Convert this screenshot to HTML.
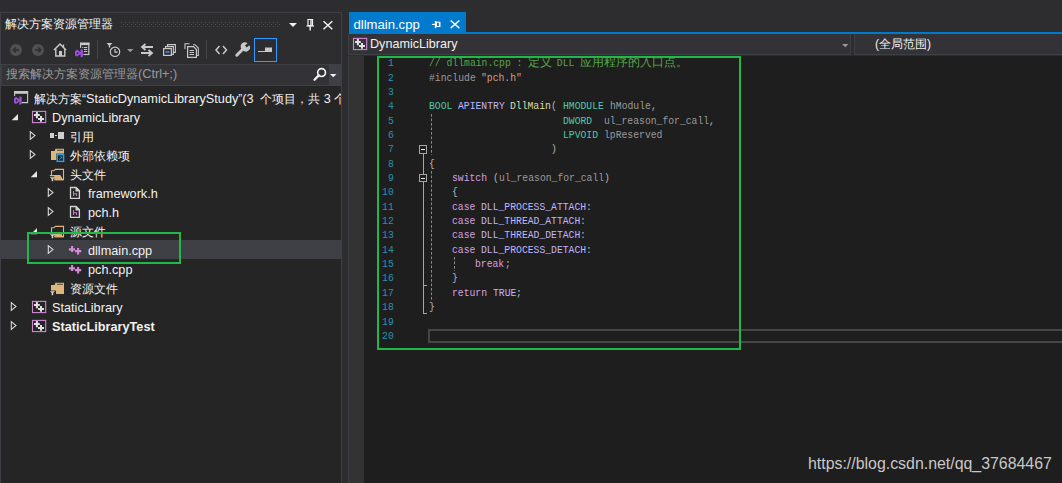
<!DOCTYPE html>
<html><head><meta charset="utf-8"><style>
*{margin:0;padding:0;box-sizing:border-box}
html,body{width:1062px;height:483px;overflow:hidden;background:#2d2d30;font-family:'Liberation Sans', sans-serif;}
.a{position:absolute}
.t{position:absolute;white-space:nowrap;color:#f1f1f1;font-size:12.7px;line-height:19px}
.c{position:absolute;white-space:pre;font-family:'Liberation Mono', monospace;font-size:11.5px;line-height:14px;color:#dcdcdc}
svg{position:absolute;overflow:visible}
</style></head><body>

<div class="a" style="left:0;top:12px;width:342px;height:471px;border:1px solid #3f3f46;border-bottom:none;background:#2d2d30"></div>
<div class="t" style="left:5px;top:14px;font-size:12px;line-height:20px;color:#f1f1f1">解决方案资源管理器</div>
<svg style="left:121px;top:22px" width="160" height="5"><defs><pattern id="gp" width="4" height="4" patternUnits="userSpaceOnUse"><rect x="0" y="0" width="1" height="1" fill="#505055"/><rect x="2" y="2" width="1" height="1" fill="#505055"/></pattern></defs><rect width="159" height="5" fill="url(#gp)"/></svg>
<svg style="left:289px;top:23px" width="9" height="5"><path d="M0 0H8L4 4Z" fill="#f1f1f1"/></svg>
<svg style="left:306px;top:19px" width="9" height="12"><path d="M2 0.5H6.5V6.5H2Z" fill="none" stroke="#f1f1f1" stroke-width="1.2"/><path d="M0.5 7H8" stroke="#f1f1f1" stroke-width="1.2"/><path d="M4.2 7V11.5" stroke="#f1f1f1" stroke-width="1.4"/><path d="M5 1V6.5" stroke="#f1f1f1" stroke-width="1.4"/></svg>
<svg style="left:323px;top:21px" width="11" height="9"><path d="M0.5 0.3L9.3 8.2M9.3 0.3L0.5 8.2" stroke="#f1f1f1" stroke-width="1.5"/></svg>
<svg style="left:10px;top:44px" width="13" height="13"><circle cx="6" cy="6" r="6" fill="#505050"/><path d="M9 6H3.5M5.8 3.5L3.2 6L5.8 8.5" stroke="#2d2d30" stroke-width="1.4" fill="none"/></svg>
<svg style="left:32px;top:44px" width="13" height="13"><circle cx="6" cy="6" r="6" fill="#505050"/><path d="M3 6H8.5M6.2 3.5L8.8 6L6.2 8.5" stroke="#2d2d30" stroke-width="1.4" fill="none"/></svg>
<svg style="left:53px;top:42px" width="15" height="15"><path d="M1 8L7 2L13 8" fill="none" stroke="#c8c8c8" stroke-width="1.5"/><path d="M10.5 2.5V5" stroke="#c8c8c8" stroke-width="1.3"/><path d="M2.8 7V14H11.8V7" fill="none" stroke="#c8c8c8" stroke-width="1.4"/><rect x="6" y="9" width="3" height="5" fill="#c8c8c8"/></svg>
<svg style="left:72px;top:40px" width="20" height="20"><rect x="8.6" y="3.3" width="8.2" height="11.2" fill="#2d2d30" stroke="#c8c8c8" stroke-width="1.2"/><rect x="8" y="2.7" width="9.4" height="2.4" fill="#c8c8c8"/><rect x="10" y="7" width="1.2" height="1.2" fill="#c8c8c8"/><path d="M12 7.5H15.2M12 9.5H15.2M12 11.5H15.2" stroke="#c8c8c8" stroke-width="1.1"/><rect x="7.5" y="7.8" width="4" height="9.6" fill="#2d2d30"/><path d="M3 11.3L5 9.6L8.6 12.2V8.9L11 9.9V16.6L8.6 17.4V14.1L5 16.6L3 15.6Z M4.9 11.8V14.5L6.8 13.15Z" fill="#9a4fd9" fill-rule="evenodd"/></svg>
<div class="a" style="left:97px;top:40px;width:1px;height:19px;background:#46464a"></div>
<svg style="left:106px;top:42px" width="16" height="16"><path d="M0.5 1H6.5L4.2 3.5V5.5H2.8V3.5Z" fill="#c8c8c8"/><circle cx="9" cy="9.8" r="4.7" fill="none" stroke="#c8c8c8" stroke-width="1.2"/><path d="M9 7V10.2H11.6" fill="none" stroke="#c8c8c8" stroke-width="1.2"/></svg>
<svg style="left:127px;top:49px" width="7" height="4"><path d="M0 0H6.5L3.25 3.2Z" fill="#999"/></svg>
<svg style="left:140px;top:43px" width="14" height="14"><path d="M13 4H3M5.5 1L2 4L5.5 7" fill="none" stroke="#c8c8c8" stroke-width="1.8"/><path d="M1 10H11M8.5 7L12 10L8.5 13" fill="none" stroke="#c8c8c8" stroke-width="1.8"/></svg>
<svg style="left:163px;top:44px" width="13" height="12"><path d="M4.5 2.5V0.6H12.4V8.4H10.5" fill="none" stroke="#c8c8c8" stroke-width="1.1"/><path d="M2.5 4.5V2.6H10.4V10.4H8.5" fill="none" stroke="#c8c8c8" stroke-width="1.1"/><rect x="0.6" y="4.6" width="7.8" height="6.8" fill="#2d2d30" stroke="#c8c8c8" stroke-width="1.2"/><path d="M2.5 8H6.5" stroke="#4aa3ff" stroke-width="1.3"/></svg>
<svg style="left:184px;top:43px" width="15" height="15"><path d="M1 6V0.7H5.5" fill="none" stroke="#c8c8c8" stroke-width="1.1"/><path d="M9 1.7H11L14.3 5V12.5H13" fill="none" stroke="#c8c8c8" stroke-width="1.1"/><path d="M3.6 3.6H9.5L12.4 6.5V14.4H3.6Z" fill="#2d2d30" stroke="#c8c8c8" stroke-width="1.2"/><path d="M5.5 7.5H10M5.5 9.5H10M5.5 11.5H10" stroke="#c8c8c8" stroke-width="1.1"/></svg>
<div class="a" style="left:206px;top:40px;width:1px;height:19px;background:#46464a"></div>
<svg style="left:215px;top:45px" width="13" height="10"><path d="M4.5 1L1 5L4.5 9M8 1L11.5 5L8 9" fill="none" stroke="#c8c8c8" stroke-width="1.5"/></svg>
<svg style="left:235px;top:42px" width="16" height="16"><path d="M1.8 13.2L8 7" stroke="#c8c8c8" stroke-width="3" stroke-linecap="round"/><path d="M7.2 7.8A4.2 4.2 0 0 1 12.5 1.2L10 3.5L11.8 5.5L14.3 3.2A4.2 4.2 0 0 1 8 8.6Z" fill="#c8c8c8"/></svg>
<div class="a" style="left:254px;top:38px;width:22.5px;height:24px;border:1px solid #3399ff"></div>
<svg style="left:258px;top:47px" width="15" height="6"><path d="M0 4.5H8" stroke="#c8c8c8" stroke-width="1"/><rect x="7" y="0.5" width="7" height="4.5" fill="#c8c8c8"/></svg>
<div class="a" style="left:1px;top:64px;width:340px;height:22px;background:#333337;border:1px solid #3f3f46;border-right:none"></div>
<div class="a" style="left:329px;top:65px;width:12px;height:20px;background:#3f3f46"></div>
<div class="t" style="left:6px;top:64px;font-size:12px;line-height:21px;color:#999999">搜索解决方案资源管理器<span style="font-size:12.7px">(Ctrl+;)</span></div>
<svg style="left:313px;top:67px" width="14" height="14"><circle cx="8.6" cy="5.6" r="3.9" fill="none" stroke="#f1f1f1" stroke-width="1.7"/><path d="M5.8 8.4L1.5 12.7" stroke="#f1f1f1" stroke-width="2.3" stroke-linecap="round"/></svg>
<svg style="left:330.3px;top:74px" width="7" height="4"><path d="M0 0H6.5L3.25 3.2Z" fill="#f1f1f1"/></svg>
<div class="a" style="left:1px;top:86px;width:340px;height:397px;background:#252526"></div>
<div class="a" style="left:1px;top:240px;width:340px;height:19px;background:#3f3f46"></div>
<svg style="left:14px;top:90.90px" width="16" height="16"><path d="M0.6 5V0.6H13.6V11.6H7.5" fill="none" stroke="#c8c8c8" stroke-width="1.1"/><rect x="0.3" y="0.3" width="13.8" height="2.5" fill="#c8c8c8"/><path d="M0 7.3L2 5.8L5.4 8.3V5.2L7.7 6.1V13.1L5.4 14V10.6L2 13.1L0 12.1Z M1.9 8V11L3.8 9.5Z" fill="#9a4fd9" fill-rule="evenodd"/></svg>
<div class="t" style="left:34px;top:89.8px;width:307px;overflow:hidden"><span style="font-size:12px">解决方案“</span>StaticDynamicLibraryStudy<span style="font-size:12px">”</span><span style="padding-right:3px">(3 </span><span style="font-size:12px">个项目，共</span> 3 <span style="font-size:12px">个项目</span></div>
<svg style="left:11px;top:113.70px" width="8" height="8"><path d="M7 0V6.2H0.7Z" fill="#e6e6e6"/></svg>
<svg style="left:28px;top:108.00px" width="24" height="20"><rect x="4.5" y="3.4" width="13.2" height="11.2" fill="none" stroke="#cf87d0" stroke-width="1.1"/><path d="M6 7.1H11.8M8.9 4V10.2M10 10.9H16M13 8V13.8" stroke="#e0e0e0" stroke-width="2"/></svg>
<div class="t" style="left:52px;top:108.8px;">DynamicLibrary</div>
<svg style="left:30px;top:131.20px" width="7" height="10"><path d="M0.3 0.6L5 4.5L0.3 8.4Z" fill="none" stroke="#d6d6d6" stroke-width="1.1"/></svg>
<svg style="left:46px;top:126.00px" width="24" height="20"><rect x="4" y="7" width="4" height="5" fill="#cfcfcf"/><path d="M9 9.5H11" stroke="#cfcfcf" stroke-width="1"/><rect x="12" y="6" width="6" height="7" fill="#cfcfcf"/></svg>
<div class="t" style="left:70px;top:127.8px;font-size:12px">引用</div>
<svg style="left:30px;top:150.20px" width="7" height="10"><path d="M0.3 0.6L5 4.5L0.3 8.4Z" fill="none" stroke="#d6d6d6" stroke-width="1.1"/></svg>
<svg style="left:46px;top:145.00px" width="24" height="20"><path d="M5 15V6H8.6L9.5 3.7H18V15Z" fill="#dcb67a"/><path d="M11 4.8H17V5.6H11Z" fill="#252526"/><rect x="10.2" y="8.6" width="8.4" height="8.6" fill="#252526"/><rect x="11.2" y="9.6" width="6.4" height="6.8" fill="#1e1e1e" stroke="#2ea3e6" stroke-width="1.4"/><path d="M13.2 14.6L15.6 12.2" stroke="#2ea3e6" stroke-width="1"/><path d="M13.8 11.4H16.2V13.8Z" fill="#2ea3e6"/></svg>
<div class="t" style="left:70px;top:146.8px;font-size:12px">外部依赖项</div>
<svg style="left:30px;top:170.70px" width="8" height="8"><path d="M7 0V6.2H0.7Z" fill="#e6e6e6"/></svg>
<svg style="left:46px;top:164.00px" width="24" height="20"><path d="M5.5 11.5V6.8H8L9.3 5.4H17.5V15.6H8.8" fill="none" stroke="#dcb67a" stroke-width="1.1"/><path d="M3.8 10.9H14.3L17.4 16.2H8.3V12.2H3.8Z" fill="#dcb67a"/><path d="M9.3 12.2H13.6L15.6 15.2H9.3Z" fill="#d9b072" opacity="0.85"/><path d="M3.9 13.2H9L7.2 15.1V17.2H5.7V15.1Z" fill="#d4d4d4"/></svg>
<div class="t" style="left:70px;top:165.8px;font-size:12px">头文件</div>
<svg style="left:48px;top:188.20px" width="7" height="10"><path d="M0.3 0.6L5 4.5L0.3 8.4Z" fill="none" stroke="#d6d6d6" stroke-width="1.1"/></svg>
<svg style="left:64px;top:184.00px" width="24" height="20"><path d="M6.5 3.5H12L15.4 6.9V14.4H6.5Z" fill="none" stroke="#d0d0d0" stroke-width="1.3"/><path d="M11.5 2.9H12.3L16 6.6V7.4H11.5Z" fill="#d0d0d0"/><path d="M9.5 7V12M9.5 9.8H12.5V12" fill="none" stroke="#d070d0" stroke-width="1.1"/></svg>
<div class="t" style="left:88px;top:184.8px;">framework.h</div>
<svg style="left:48px;top:207.20px" width="7" height="10"><path d="M0.3 0.6L5 4.5L0.3 8.4Z" fill="none" stroke="#d6d6d6" stroke-width="1.1"/></svg>
<svg style="left:64px;top:203.00px" width="24" height="20"><path d="M6.5 3.5H12L15.4 6.9V14.4H6.5Z" fill="none" stroke="#d0d0d0" stroke-width="1.3"/><path d="M11.5 2.9H12.3L16 6.6V7.4H11.5Z" fill="#d0d0d0"/><path d="M9.5 7V12M9.5 9.8H12.5V12" fill="none" stroke="#d070d0" stroke-width="1.1"/></svg>
<div class="t" style="left:88px;top:203.8px;">pch.h</div>
<svg style="left:30px;top:227.70px" width="8" height="8"><path d="M7 0V6.2H0.7Z" fill="#e6e6e6"/></svg>
<svg style="left:46px;top:221.00px" width="24" height="20"><path d="M5.5 11.5V6.8H8L9.3 5.4H17.5V15.6H8.8" fill="none" stroke="#dcb67a" stroke-width="1.1"/><path d="M3.8 10.9H14.3L17.4 16.2H8.3V12.2H3.8Z" fill="#dcb67a"/><path d="M9.3 12.2H13.6L15.6 15.2H9.3Z" fill="#d9b072" opacity="0.85"/><path d="M3.9 13.2H9L7.2 15.1V17.2H5.7V15.1Z" fill="#d4d4d4"/></svg>
<div class="t" style="left:70px;top:222.8px;font-size:12px">源文件</div>
<svg style="left:48px;top:245.20px" width="7" height="10"><path d="M0.3 0.6L5 4.5L0.3 8.4Z" fill="none" stroke="#d6d6d6" stroke-width="1.1"/></svg>
<svg style="left:64px;top:240.00px" width="24" height="20"><path d="M4.9 9.35H11M8.1 6V12M11 11.1H17.2M14.1 8V14.6" stroke="#da88dc" stroke-width="2.1"/></svg>
<div class="t" style="left:88px;top:241.8px;">dllmain.cpp</div>
<svg style="left:64px;top:259.00px" width="24" height="20"><path d="M4.9 9.35H11M8.1 6V12M11 11.1H17.2M14.1 8V14.6" stroke="#da88dc" stroke-width="2.1"/></svg>
<div class="t" style="left:88px;top:260.8px;">pch.cpp</div>
<svg style="left:46px;top:278.00px" width="24" height="20"><path d="M5 16V7H8.6L9.4 4.7H18V16Z" fill="#dcb67a"/><path d="M11 5.8H17V6.6H11Z" fill="#252526"/><path d="M3 12.6H10V18H3Z" fill="#252526"/><path d="M3.9 13.2H9L7.2 15.1V17.2H5.7V15.1Z" fill="#d4d4d4"/></svg>
<div class="t" style="left:70px;top:279.8px;font-size:12px">资源文件</div>
<svg style="left:11px;top:302.20px" width="7" height="10"><path d="M0.3 0.6L5 4.5L0.3 8.4Z" fill="none" stroke="#d6d6d6" stroke-width="1.1"/></svg>
<svg style="left:28px;top:298.00px" width="24" height="20"><rect x="4.5" y="3.4" width="13.2" height="11.2" fill="none" stroke="#cf87d0" stroke-width="1.1"/><path d="M6 7.1H11.8M8.9 4V10.2M10 10.9H16M13 8V13.8" stroke="#e0e0e0" stroke-width="2"/></svg>
<div class="t" style="left:52px;top:298.8px;">StaticLibrary</div>
<svg style="left:11px;top:321.20px" width="7" height="10"><path d="M0.3 0.6L5 4.5L0.3 8.4Z" fill="none" stroke="#d6d6d6" stroke-width="1.1"/></svg>
<svg style="left:28px;top:317.00px" width="24" height="20"><rect x="4.5" y="3.4" width="13.2" height="11.2" fill="none" stroke="#cf87d0" stroke-width="1.1"/><path d="M6 7.1H11.8M8.9 4V10.2M10 10.9H16M13 8V13.8" stroke="#e0e0e0" stroke-width="2"/></svg>
<div class="t" style="left:52px;top:317.8px;font-weight:bold">StaticLibraryTest</div>
<div class="a" style="left:27px;top:232px;width:154px;height:32px;border:2px solid #21b84a"></div>
<div class="a" style="left:349px;top:12px;width:117px;height:22px;background:#007acc"></div>
<div class="a" style="left:349px;top:32px;width:713px;height:2px;background:#007acc"></div>
<div class="t" style="left:353.5px;top:15px;font-size:13.1px;line-height:19px;color:#ffffff">dllmain.cpp</div>
<svg style="left:431px;top:20px" width="11" height="10"><path d="M0.9 4.4H4.2" stroke="#fff" stroke-width="1.1"/><path d="M4.5 1V8.2" stroke="#fff" stroke-width="1.3"/><rect x="5.4" y="2.2" width="3.3" height="4.3" fill="none" stroke="#fff" stroke-width="1.1"/><path d="M8.6 2V6.8" stroke="#fff" stroke-width="1.4"/></svg>
<svg style="left:450px;top:20px" width="11" height="10"><path d="M0.6 0.5L9.4 8.1M9.4 0.5L0.6 8.1" stroke="#fff" stroke-width="1.4"/></svg>
<div class="a" style="left:348px;top:34px;width:714px;height:22px;background:#2d2d30"></div>
<div class="a" style="left:348px;top:34px;width:503px;height:21px;background:#333337;border:1px solid #3f3f46;border-top:none"></div>
<div class="a" style="left:854px;top:34px;width:210px;height:21px;background:#333337;border:1px solid #3f3f46;border-top:none"></div>
<svg style="left:349px;top:35px" width="24" height="20"><rect x="4.5" y="3.4" width="13.2" height="11.2" fill="none" stroke="#cf87d0" stroke-width="1.1"/><path d="M6 7.1H11.8M8.9 4V10.2M10 10.9H16M13 8V13.8" stroke="#e0e0e0" stroke-width="2"/></svg>
<div class="t" style="left:370px;top:35px;font-size:12.6px;line-height:19px">DynamicLibrary</div>
<svg style="left:842px;top:44px" width="7" height="4"><path d="M0 0H6.5L3.25 3.2Z" fill="#999"/></svg>
<div class="t" style="left:875px;top:35px;font-size:12px;line-height:19px">(全局范围)</div>
<div class="a" style="left:348px;top:56px;width:714px;height:427px;background:#1e1e1e;border-left:1px solid #3f3f46"></div>
<div class="a" style="left:349px;top:56px;width:15px;height:427px;background:#333333"></div>
<div class="c" style="left:387.10px;top:56.20px;color:#2b91af;transform:scaleX(0.8464);transform-origin:100% 0;width:6.90px">1</div>
<div class="c" style="left:387.10px;top:70.55px;color:#2b91af;transform:scaleX(0.8464);transform-origin:100% 0;width:6.90px">2</div>
<div class="c" style="left:387.10px;top:84.90px;color:#2b91af;transform:scaleX(0.8464);transform-origin:100% 0;width:6.90px">3</div>
<div class="c" style="left:387.10px;top:99.25px;color:#2b91af;transform:scaleX(0.8464);transform-origin:100% 0;width:6.90px">4</div>
<div class="c" style="left:387.10px;top:113.60px;color:#2b91af;transform:scaleX(0.8464);transform-origin:100% 0;width:6.90px">5</div>
<div class="c" style="left:387.10px;top:127.95px;color:#2b91af;transform:scaleX(0.8464);transform-origin:100% 0;width:6.90px">6</div>
<div class="c" style="left:387.10px;top:142.30px;color:#2b91af;transform:scaleX(0.8464);transform-origin:100% 0;width:6.90px">7</div>
<div class="c" style="left:387.10px;top:156.65px;color:#2b91af;transform:scaleX(0.8464);transform-origin:100% 0;width:6.90px">8</div>
<div class="c" style="left:387.10px;top:171.00px;color:#2b91af;transform:scaleX(0.8464);transform-origin:100% 0;width:6.90px">9</div>
<div class="c" style="left:380.20px;top:185.35px;color:#2b91af;transform:scaleX(0.8464);transform-origin:100% 0;width:13.80px">10</div>
<div class="c" style="left:380.20px;top:199.70px;color:#2b91af;transform:scaleX(0.8464);transform-origin:100% 0;width:13.80px">11</div>
<div class="c" style="left:380.20px;top:214.05px;color:#2b91af;transform:scaleX(0.8464);transform-origin:100% 0;width:13.80px">12</div>
<div class="c" style="left:380.20px;top:228.40px;color:#2b91af;transform:scaleX(0.8464);transform-origin:100% 0;width:13.80px">13</div>
<div class="c" style="left:380.20px;top:242.75px;color:#2b91af;transform:scaleX(0.8464);transform-origin:100% 0;width:13.80px">14</div>
<div class="c" style="left:380.20px;top:257.10px;color:#2b91af;transform:scaleX(0.8464);transform-origin:100% 0;width:13.80px">15</div>
<div class="c" style="left:380.20px;top:271.45px;color:#2b91af;transform:scaleX(0.8464);transform-origin:100% 0;width:13.80px">16</div>
<div class="c" style="left:380.20px;top:285.80px;color:#2b91af;transform:scaleX(0.8464);transform-origin:100% 0;width:13.80px">17</div>
<div class="c" style="left:380.20px;top:300.15px;color:#2b91af;transform:scaleX(0.8464);transform-origin:100% 0;width:13.80px">18</div>
<div class="c" style="left:380.20px;top:314.50px;color:#2b91af;transform:scaleX(0.8464);transform-origin:100% 0;width:13.80px">19</div>
<div class="c" style="left:380.20px;top:328.85px;color:#2b91af;transform:scaleX(0.8464);transform-origin:100% 0;width:13.80px">20</div>
<div class="c" style="left:428.60px;top:56.20px;color:#57a64a;transform:scaleX(0.8464);transform-origin:0 0">// dllmain.cpp : </div>
<div class="c" style="left:527.88px;top:55.70px;font-size:11.68px;letter-spacing:0;color:#57a64a">定义</div>
<div class="c" style="left:551.24px;top:56.20px;color:#57a64a;transform:scaleX(0.8464);transform-origin:0 0"> DLL </div>
<div class="c" style="left:580.44px;top:55.70px;font-size:11.68px;letter-spacing:0;color:#57a64a">应用程序的入口点。</div>
<div class="c" style="left:428.60px;top:70.55px;color:#9b9b9b;transform:scaleX(0.8464);transform-origin:0 0">#include </div>
<div class="c" style="left:481.16px;top:70.55px;color:#d69d85;transform:scaleX(0.8464);transform-origin:0 0">"pch.h"</div>
<div class="c" style="left:428.60px;top:99.25px;color:#4ec9b0;transform:scaleX(0.8464);transform-origin:0 0">BOOL</div>
<div class="c" style="left:457.80px;top:99.25px;color:#beb7ff;transform:scaleX(0.8464);transform-origin:0 0">APIENTRY</div>
<div class="c" style="left:510.36px;top:99.25px;color:#dcdcaa;transform:scaleX(0.8464);transform-origin:0 0">DllMain</div>
<div class="c" style="left:551.24px;top:99.25px;color:#b4b4b4;transform:scaleX(0.8464);transform-origin:0 0">(</div>
<div class="c" style="left:562.92px;top:99.25px;color:#4ec9b0;transform:scaleX(0.8464);transform-origin:0 0">HMODULE</div>
<div class="c" style="left:609.64px;top:99.25px;color:#9a9a9a;transform:scaleX(0.8464);transform-origin:0 0">hModule</div>
<div class="c" style="left:650.52px;top:99.25px;color:#b4b4b4;transform:scaleX(0.8464);transform-origin:0 0">,</div>
<div class="c" style="left:562.92px;top:113.60px;color:#4ec9b0;transform:scaleX(0.8464);transform-origin:0 0">DWORD</div>
<div class="c" style="left:603.80px;top:113.60px;color:#9a9a9a;transform:scaleX(0.8464);transform-origin:0 0">ul_reason_for_call</div>
<div class="c" style="left:708.92px;top:113.60px;color:#b4b4b4;transform:scaleX(0.8464);transform-origin:0 0">,</div>
<div class="c" style="left:562.92px;top:127.95px;color:#4ec9b0;transform:scaleX(0.8464);transform-origin:0 0">LPVOID</div>
<div class="c" style="left:603.80px;top:127.95px;color:#9a9a9a;transform:scaleX(0.8464);transform-origin:0 0">lpReserved</div>
<div class="c" style="left:551.24px;top:142.30px;color:#b4b4b4;transform:scaleX(0.8464);transform-origin:0 0">)</div>
<div class="c" style="left:428.60px;top:156.65px;color:#b4b4b4;transform:scaleX(0.8464);transform-origin:0 0">{</div>
<div class="c" style="left:451.96px;top:171.00px;color:#d8a0df;transform:scaleX(0.8464);transform-origin:0 0">switch</div>
<div class="c" style="left:492.84px;top:171.00px;color:#b4b4b4;transform:scaleX(0.8464);transform-origin:0 0">(</div>
<div class="c" style="left:498.68px;top:171.00px;color:#9a9a9a;transform:scaleX(0.8464);transform-origin:0 0">ul_reason_for_call</div>
<div class="c" style="left:603.80px;top:171.00px;color:#b4b4b4;transform:scaleX(0.8464);transform-origin:0 0">)</div>
<div class="c" style="left:451.96px;top:185.35px;color:#b4b4b4;transform:scaleX(0.8464);transform-origin:0 0">{</div>
<div class="c" style="left:451.96px;top:199.70px;color:#d8a0df;transform:scaleX(0.8464);transform-origin:0 0">case</div>
<div class="c" style="left:481.16px;top:199.70px;color:#beb7ff;transform:scaleX(0.8464);transform-origin:0 0">DLL_PROCESS_ATTACH</div>
<div class="c" style="left:586.28px;top:199.70px;color:#b4b4b4;transform:scaleX(0.8464);transform-origin:0 0">:</div>
<div class="c" style="left:451.96px;top:214.05px;color:#d8a0df;transform:scaleX(0.8464);transform-origin:0 0">case</div>
<div class="c" style="left:481.16px;top:214.05px;color:#beb7ff;transform:scaleX(0.8464);transform-origin:0 0">DLL_THREAD_ATTACH</div>
<div class="c" style="left:580.44px;top:214.05px;color:#b4b4b4;transform:scaleX(0.8464);transform-origin:0 0">:</div>
<div class="c" style="left:451.96px;top:228.40px;color:#d8a0df;transform:scaleX(0.8464);transform-origin:0 0">case</div>
<div class="c" style="left:481.16px;top:228.40px;color:#beb7ff;transform:scaleX(0.8464);transform-origin:0 0">DLL_THREAD_DETACH</div>
<div class="c" style="left:580.44px;top:228.40px;color:#b4b4b4;transform:scaleX(0.8464);transform-origin:0 0">:</div>
<div class="c" style="left:451.96px;top:242.75px;color:#d8a0df;transform:scaleX(0.8464);transform-origin:0 0">case</div>
<div class="c" style="left:481.16px;top:242.75px;color:#beb7ff;transform:scaleX(0.8464);transform-origin:0 0">DLL_PROCESS_DETACH</div>
<div class="c" style="left:586.28px;top:242.75px;color:#b4b4b4;transform:scaleX(0.8464);transform-origin:0 0">:</div>
<div class="c" style="left:475.32px;top:257.10px;color:#d8a0df;transform:scaleX(0.8464);transform-origin:0 0">break</div>
<div class="c" style="left:504.52px;top:257.10px;color:#b4b4b4;transform:scaleX(0.8464);transform-origin:0 0">;</div>
<div class="c" style="left:451.96px;top:271.45px;color:#b4b4b4;transform:scaleX(0.8464);transform-origin:0 0">}</div>
<div class="c" style="left:451.96px;top:285.80px;color:#d8a0df;transform:scaleX(0.8464);transform-origin:0 0">return</div>
<div class="c" style="left:492.84px;top:285.80px;color:#beb7ff;transform:scaleX(0.8464);transform-origin:0 0">TRUE</div>
<div class="c" style="left:516.20px;top:285.80px;color:#b4b4b4;transform:scaleX(0.8464);transform-origin:0 0">;</div>
<div class="c" style="left:428.60px;top:300.15px;color:#b4b4b4;transform:scaleX(0.8464);transform-origin:0 0">}</div>
<div class="a" style="left:423px;top:153px;width:1px;height:161px;background:#a5a5a5"></div>
<div class="a" style="left:423px;top:285px;width:4px;height:1px;background:#a5a5a5"></div>
<div class="a" style="left:423px;top:313px;width:4px;height:1px;background:#a5a5a5"></div>
<div class="a" style="left:419px;top:145.10px;width:8px;height:8.5px;border:1px solid #a5a5a5;background:#1e1e1e"></div>
<div class="a" style="left:421px;top:149.00px;width:4px;height:1.2px;background:#e8e8e8"></div>
<div class="a" style="left:419px;top:173.80px;width:8px;height:8.5px;border:1px solid #a5a5a5;background:#1e1e1e"></div>
<div class="a" style="left:421px;top:177.70px;width:4px;height:1.2px;background:#e8e8e8"></div>
<div class="a" style="left:431px;top:114px;width:1px;height:41px;background-image:linear-gradient(#8a8a8a 55%,transparent 55%);background-size:1px 4.5px"></div>
<div class="a" style="left:431px;top:171px;width:1px;height:129px;background-image:linear-gradient(#8a8a8a 55%,transparent 55%);background-size:1px 4.5px"></div>
<div class="a" style="left:454px;top:257px;width:1px;height:14px;background-image:linear-gradient(#8a8a8a 55%,transparent 55%);background-size:1px 4.5px"></div>
<div class="a" style="left:428px;top:328.5px;width:640px;height:14px;border:2px solid #464646"></div>
<div class="a" style="left:377px;top:56px;width:364px;height:294px;border:2px solid #21b84a"></div>
<div class="t" style="left:808px;top:453px;font-size:15.9px;line-height:22px;color:#c8c8c8">https://blog.csdn.net/qq_37684467</div>
</body></html>
